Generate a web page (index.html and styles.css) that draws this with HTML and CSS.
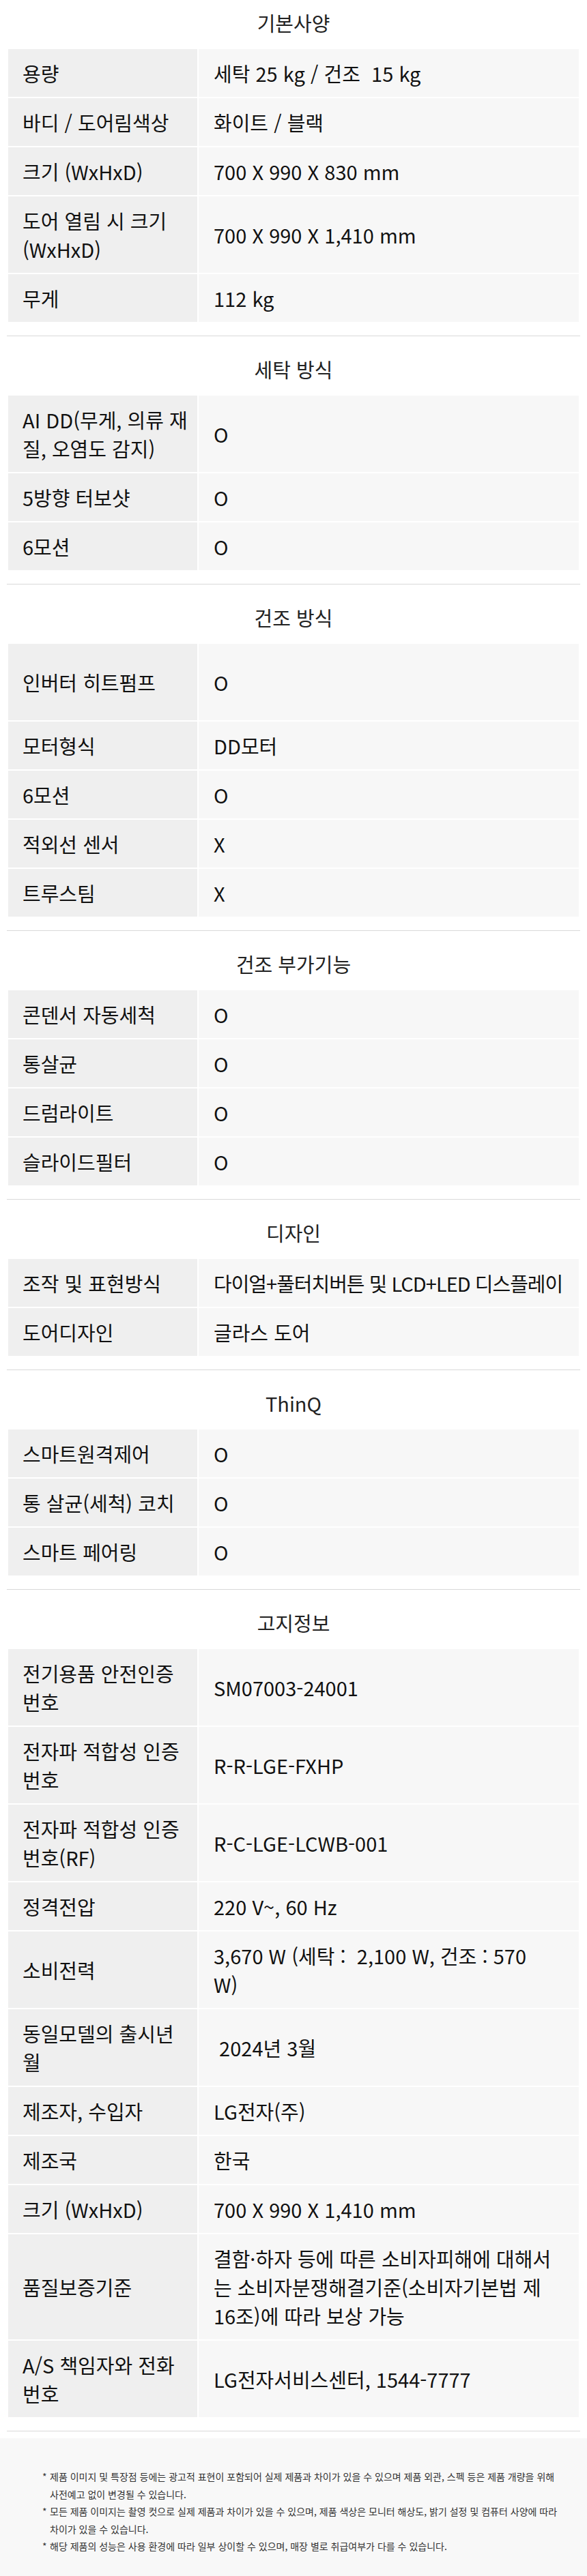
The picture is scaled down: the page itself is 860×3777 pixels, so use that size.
FILE: index.html
```html
<!DOCTYPE html>
<html lang="ko">
<head>
  <meta charset="UTF-8">
  <title>제품 사양</title>
  <link rel="stylesheet" href="styles.css">
</head>
<body>

  <div class="spec">

    <section class="spec-group">
      <h2 class="spec-title">기본사양</h2>
      <table class="spec-table">
        <tr><th>용량</th><td>세탁 25 kg / 건조&nbsp; 15 kg</td></tr>
        <tr><th>바디 / 도어림색상</th><td>화이트 / 블랙</td></tr>
        <tr><th>크기 (WxHxD)</th><td>700 X 990 X 830 mm</td></tr>
        <tr><th>도어 열림 시 크기<br>(WxHxD)</th><td>700 X 990 X 1,410 mm</td></tr>
        <tr><th>무게</th><td>112 kg</td></tr>
      </table>
    </section>

    <section class="spec-group">
      <h2 class="spec-title">세탁 방식</h2>
      <table class="spec-table">
        <tr><th>AI DD(무게, 의류 재<br>질, 오염도 감지)</th><td>O</td></tr>
        <tr><th>5방향 터보샷</th><td>O</td></tr>
        <tr><th>6모션</th><td>O</td></tr>
      </table>
    </section>

    <section class="spec-group">
      <h2 class="spec-title">건조 방식</h2>
      <table class="spec-table">
        <tr class="tall"><th>인버터 히트펌프</th><td>O</td></tr>
        <tr><th>모터형식</th><td>DD모터</td></tr>
        <tr><th>6모션</th><td>O</td></tr>
        <tr><th>적외선 센서</th><td>X</td></tr>
        <tr><th>트루스팀</th><td>X</td></tr>
      </table>
    </section>

    <section class="spec-group">
      <h2 class="spec-title">건조 부가기능</h2>
      <table class="spec-table">
        <tr><th>콘덴서 자동세척</th><td>O</td></tr>
        <tr><th>통살균</th><td>O</td></tr>
        <tr><th>드럼라이트</th><td>O</td></tr>
        <tr><th>슬라이드필터</th><td>O</td></tr>
      </table>
    </section>

    <section class="spec-group">
      <h2 class="spec-title">디자인</h2>
      <table class="spec-table">
        <tr><th>조작 및 표현방식</th><td class="tight">다이얼+풀터치버튼 및 LCD+LED 디스플레이</td></tr>
        <tr><th>도어디자인</th><td>글라스 도어</td></tr>
      </table>
    </section>

    <section class="spec-group">
      <h2 class="spec-title">ThinQ</h2>
      <table class="spec-table">
        <tr><th>스마트원격제어</th><td>O</td></tr>
        <tr><th>통 살균(세척) 코치</th><td>O</td></tr>
        <tr><th>스마트 페어링</th><td>O</td></tr>
      </table>
    </section>

    <section class="spec-group">
      <h2 class="spec-title">고지정보</h2>
      <table class="spec-table">
        <tr><th>전기용품 안전인증<br>번호</th><td>SM07003-24001</td></tr>
        <tr><th>전자파 적합성 인증<br>번호</th><td>R-R-LGE-FXHP</td></tr>
        <tr><th>전자파 적합성 인증<br>번호(RF)</th><td>R-C-LGE-LCWB-001</td></tr>
        <tr><th>정격전압</th><td>220 V~, 60 Hz</td></tr>
        <tr><th>소비전력</th><td>3,670 W (세탁 :&nbsp; 2,100 W, 건조 : 570<br>W)</td></tr>
        <tr><th>동일모델의 출시년<br>월</th><td>&nbsp;2024년 3월</td></tr>
        <tr><th>제조자, 수입자</th><td>LG전자(주)</td></tr>
        <tr><th>제조국</th><td>한국</td></tr>
        <tr><th>크기 (WxHxD)</th><td>700 X 990 X 1,410 mm</td></tr>
        <tr><th>품질보증기준</th><td>결함·하자 등에 따른 소비자피해에 대해서<br>는 소비자분쟁해결기준(소비자기본법 제<br>16조)에 따라 보상 가능</td></tr>
        <tr><th>A/S 책임자와 전화<br>번호</th><td>LG전자서비스센터, 1544-7777</td></tr>
      </table>
    </section>

  </div>

  <div class="notice">
    <p class="note"><span class="mark">*</span><span>제품 이미지 및 특장점 등에는 광고적 표현이 포함되어 실제 제품과 차이가 있을 수 있으며 제품 외관, 스펙 등은 제품 개량을 위해 사전예고 없이 변경될 수 있습니다.</span></p>
    <p class="note"><span class="mark">*</span><span>모든 제품 이미지는 촬영 컷으로 실제 제품과 차이가 있을 수 있으며, 제품 색상은 모니터 해상도, 밝기 설정 및 컴퓨터 사양에 따라 차이가 있을 수 있습니다.</span></p>
    <p class="note"><span class="mark">*</span><span>해당 제품의 성능은 사용 환경에 따라 일부 상이할 수 있으며, 매장 별로 취급여부가 다를 수 있습니다.</span></p>
  </div>

</body>
</html>
```

FILE: styles.css
```css
body {
  margin: 0;
  font-family: "Noto Sans CJK KR", "Noto Sans", sans-serif;
  color: #111;
  background: #fff;
}

.spec {
  padding: 0 10px;
}

.spec-group {
  border-bottom: 1px solid #d9d9d9;
  padding-bottom: 18px;
}

.spec-title {
  margin: 27px 0 16px;
  font-size: 29px;
  font-weight: 400;
  line-height: 42px;
  text-align: center;
  color: #222;
}

.spec-group:first-child .spec-title {
  margin-top: 12px;
}

.spec-table {
  width: 100%;
  border-collapse: separate;
  border-spacing: 2px;
  table-layout: fixed;
}

/* line breaks follow the original copy, so cells don't wrap on their own */
.spec-table th,
.spec-table td {
  font-size: 29px;
  font-weight: 400;
  line-height: 42px;
  text-align: left;
  vertical-align: middle;
  white-space: nowrap;
  padding-top: 14px;
  padding-bottom: 14px;
}

.spec-table th {
  box-sizing: border-box;
  width: 277px;
  padding-left: 21px;
  padding-right: 6px;
  background: #efefef;
}

.spec-table td {
  padding-left: 22px;
  padding-right: 4px;
  background: #f7f7f7;
}

.spec-table td.tight {
  letter-spacing: -1px;
}

.spec-table .tall th,
.spec-table .tall td {
  padding-top: 35px;
  padding-bottom: 35px;
}

.notice {
  margin-top: 10px;
  padding: 44px 0 34px 62px;
  background: #f8f8f8;
}

.note {
  display: flex;
  max-width: 756px;
  margin: 0;
  font-size: 14px;
  line-height: 25.5px;
  color: #333;
  word-break: keep-all;
}

.mark {
  flex: none;
  width: 11px;
}
```
